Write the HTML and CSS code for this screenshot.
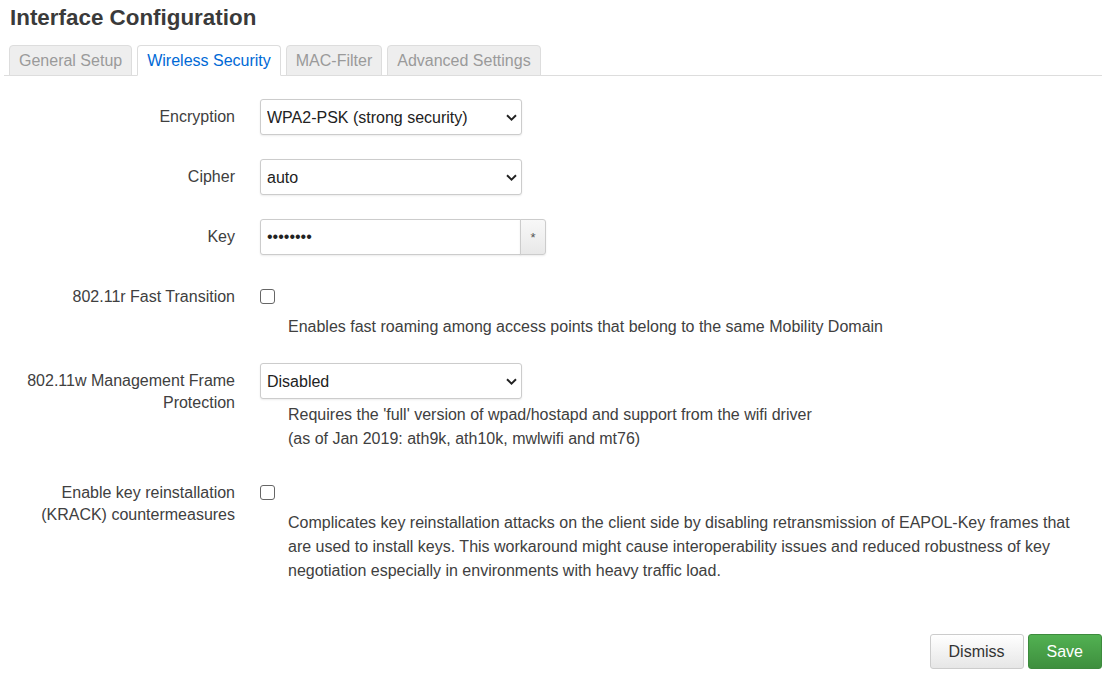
FILE: index.html
```html
<!DOCTYPE html>
<html lang="en">
<head>
<meta charset="utf-8">
<title>Interface Configuration</title>
<link rel="stylesheet" href="styles.css">
</head>
<body>
<div class="page">
  <h2 class="title">Interface Configuration</h2>
  <ul class="tabs">
    <li class="tab">General Setup</li>
    <li class="tab active">Wireless Security</li>
    <li class="tab">MAC-Filter</li>
    <li class="tab">Advanced Settings</li>
  </ul>

  <div class="form">
    <div class="row">
      <label class="label">Encryption</label>
      <div class="field">
        <div class="select-wrap">
          <select class="select"><option>WPA2-PSK (strong security)</option></select>
          <svg class="chev" viewBox="0 0 11 7" width="11" height="7"><path d="M1 1.2 L5.5 5.6 L10 1.2" fill="none" stroke="#222" stroke-width="1.9"/></svg>
        </div>
      </div>
    </div>

    <div class="row">
      <label class="label">Cipher</label>
      <div class="field">
        <div class="select-wrap">
          <select class="select"><option>auto</option></select>
          <svg class="chev" viewBox="0 0 11 7" width="11" height="7"><path d="M1 1.2 L5.5 5.6 L10 1.2" fill="none" stroke="#222" stroke-width="1.9"/></svg>
        </div>
      </div>
    </div>

    <div class="row">
      <label class="label">Key</label>
      <div class="field">
        <div class="input-group">
          <input class="input" type="password" value="12345678">
          <button class="reveal" type="button">*</button>
        </div>
      </div>
    </div>

    <div class="row">
      <label class="label">802.11r Fast Transition</label>
      <div class="field">
        <div class="check-wrap"><input class="check" type="checkbox"></div>
        <div class="desc">Enables fast roaming among access points that belong to the same Mobility Domain</div>
      </div>
    </div>

    <div class="row">
      <label class="label">802.11w Management Frame Protection</label>
      <div class="field">
        <div class="select-wrap">
          <select class="select"><option>Disabled</option></select>
          <svg class="chev" viewBox="0 0 11 7" width="11" height="7"><path d="M1 1.2 L5.5 5.6 L10 1.2" fill="none" stroke="#222" stroke-width="1.9"/></svg>
        </div>
        <div class="desc">Requires the 'full' version of wpad/hostapd and support from the wifi driver<br>(as of Jan 2019: ath9k, ath10k, mwlwifi and mt76)</div>
      </div>
    </div>

    <div class="row">
      <label class="label">Enable key reinstallation (KRACK) countermeasures</label>
      <div class="field">
        <div class="check-wrap"><input class="check" type="checkbox"></div>
        <div class="desc">Complicates key reinstallation attacks on the client side by disabling retransmission of EAPOL-Key frames that are used to install keys. This workaround might cause interoperability issues and reduced robustness of key negotiation especially in environments with heavy traffic load.</div>
      </div>
    </div>
  </div>

  <div class="actions">
    <button class="btn" type="button">Dismiss</button>
    <button class="btn btn-save" type="button">Save</button>
  </div>
</div>
</body>
</html>
```

FILE: styles.css
```css
* { box-sizing: border-box; }

body {
  margin: 0;
  background: #fff;
  font-family: "Liberation Sans", Arial, sans-serif;
  font-size: 16px;
  color: #404040;
}

.page {
  padding: 0 6px 0 4px;
}

.title {
  margin: 5px 0 0 6px;
  font-size: 22.4px;
  line-height: 26px;
  font-weight: bold;
  color: #3a3a3a;
}

.tabs {
  list-style: none;
  margin: 14px 0 0;
  padding: 0 0 0 5px;
  display: flex;
  gap: 5px;
  border-bottom: 1px solid #ddd;
}

.tab {
  margin-bottom: -1px;
  padding: 1px 9px 0;
  line-height: 28px;
  border: 1px solid #ddd;
  border-radius: 4px 4px 0 0;
  background: #eee;
  color: #9a9a9a;
}

.tab.active {
  background: #fff;
  border-bottom-color: #fff;
  color: #0069d6;
}

.form {
  padding-top: 23px;
}

.row {
  display: grid;
  grid-template-columns: 231px 1fr;
  column-gap: 25px;
  margin-bottom: 24px;
}

.label {
  text-align: right;
  padding-top: 7px;
  line-height: 22px;
  color: #404040;
}

.select-wrap {
  position: relative;
  width: 262px;
  height: 36px;
}

.select {
  appearance: none;
  -webkit-appearance: none;
  width: 100%;
  height: 36px;
  margin: 0;
  padding: 0 30px 0 6px;
  border: 1px solid #ccc;
  border-radius: 3px;
  background: #fff;
  box-shadow: 0 1px 2px rgba(0, 0, 0, 0.08);
  font-family: inherit;
  font-size: 16px;
  color: #222;
}

.chev {
  position: absolute;
  right: 5px;
  top: 15px;
  pointer-events: none;
}

.input-group {
  display: flex;
  height: 36px;
}

.input {
  width: 261px;
  height: 36px;
  margin: 0;
  padding: 0 6px;
  border: 1px solid #ccc;
  border-radius: 3px 0 0 3px;
  box-shadow: 0 1px 2px rgba(0, 0, 0, 0.08);
  font-family: inherit;
  font-size: 16px;
  color: #222;
}

.reveal {
  width: 26px;
  height: 36px;
  margin: 0 0 0 -1px;
  padding: 0;
  border: 1px solid #ccc;
  border-radius: 0 3px 3px 0;
  background: linear-gradient(#f8f8f8, #e8e8e8);
  box-shadow: 0 1px 2px rgba(0, 0, 0, 0.08);
  font-family: inherit;
  font-size: 13px;
  color: #555;
}

.check-wrap {
  height: 32px;
  padding-top: 10px;
}

.check {
  appearance: none;
  -webkit-appearance: none;
  display: block;
  width: 15px;
  height: 15px;
  margin: 0;
  border: 1px solid #666;
  border-radius: 3px;
  background: #fff;
}

.desc {
  margin-top: 4px;
  padding: 0 14px 0 28px;
  line-height: 24px;
  color: #404040;
}

.actions {
  display: flex;
  justify-content: flex-end;
  gap: 4px;
  margin-top: 51px;
}

.btn {
  height: 35px;
  padding: 0 18px;
  border: 1px solid #ccc;
  border-radius: 3px;
  background: linear-gradient(#fff, #e6e6e6);
  font-family: inherit;
  font-size: 16px;
  color: #333;
}

.btn-save {
  border-color: #3d8b3d;
  background: linear-gradient(#52b152, #3e8f3e);
  color: #fff;
}
```
